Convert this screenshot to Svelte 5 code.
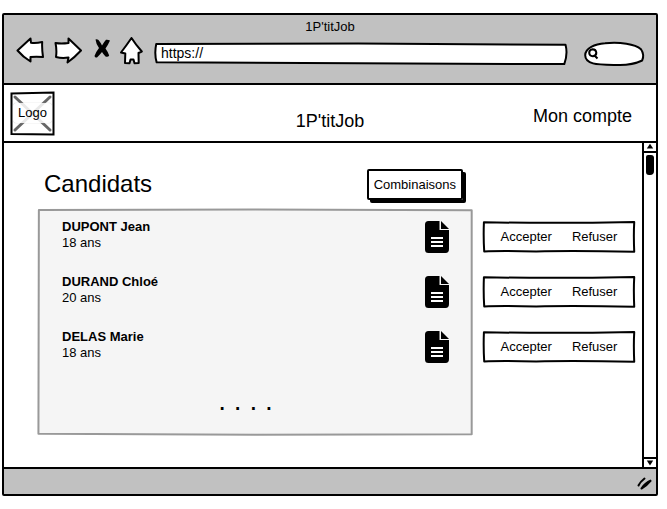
<script>
  const candidates = [
    { name: 'DUPONT Jean', age: '18 ans' },
    { name: 'DURAND Chloé', age: '20 ans' },
    { name: 'DELAS Marie', age: '18 ans' }
  ];
</script>

{#snippet frame(d)}
  <svg class="frame" viewBox="0 0 100 100" preserveAspectRatio="none" aria-hidden="true">
    <path {d} vector-effect="non-scaling-stroke" />
  </svg>
{/snippet}

<div class="window">
  <header class="chrome">
    <div class="caption">1P'titJob</div>
    <div class="toolbar">
      <button class="icon" aria-label="Précédent">
        <svg width="28" height="28" viewBox="0 0 28 28"><path class="line" d="M1.5 13.5 L14.5 1.5 L15 5.8 Q20 6.5 26.2 5 Q25.8 12 27 20 Q20 19.5 14.5 20 L14.5 24.5 Q7 20 1.5 13.5Z" /></svg>
      </button>
      <button class="icon" aria-label="Suivant">
        <svg width="28" height="28" viewBox="0 0 28 28"><path class="line" d="M27 13.5 L14.5 1.5 L14.5 6 Q7 7 1.5 6 Q3 13 2 20 Q8 21.5 14.5 20.5 L13.5 25.5 Q20 21 27 13.5Z" /></svg>
      </button>
      <button class="icon stop" aria-label="Arrêter">
        <svg width="16" height="20" viewBox="0 0 16 20"><path d="M1.5 .5 Q3 0 4.5 1 Q7 4 8 6.5 Q10 3 12 .8 Q14 .5 16 1.5 Q14 6 11.5 9.5 Q14 13 15.2 16.5 Q14 18.5 11.5 17.5 Q9.5 15.5 8 13 Q6 15.5 3 18.5 Q1 19 .5 17 Q2.5 12 5 9 Q2 5 1.5 .5Z" /></svg>
      </button>
      <button class="icon" aria-label="Accueil">
        <svg width="23" height="28" viewBox="0 0 23 28"><path class="line" d="M11.5 1 Q16 8 21.8 14.5 L18.5 16 L18.7 26 L14.5 26.3 L13.5 22.5 L10.5 22.5 L9.5 26.3 L5 26 L5.3 16.5 L1 15.5 Q6 9 11.5 1Z" /></svg>
      </button>
      <label class="address">
        {@render frame('M.3 4 C30 2 70 1 99.4 8 Q100 50 99.1 96 C80 96 50 92 .4 88 Q-.2 50 .3 4Z')}
        <input aria-label="Adresse" value="https://" />
      </label>
      <label class="search">
        {@render frame('M2 55 C2 25 18 8 35 5 C60 -1 85 8 95 30 C99 45 99 65 97 77 C85 91 75 96 60 96 C40 95 25 96 15 89 C7 83 2 70 2 55Z')}
        <svg class="lens" width="11" height="12" viewBox="0 0 11 12"><path d="M4.5 1.2 Q1.2 1.5 1.2 5 Q1.5 8.3 5 8.2 Q8.5 7.8 8.3 4.5 Q8 1.3 4.5 1.2Z M6.5 7.5 L9.5 10.5" /></svg>
        <input aria-label="Rechercher" />
      </label>
    </div>
  </header>

  <div class="banner">
    <div class="logo">
      <svg viewBox="0 0 45 45" aria-hidden="true">
        <path class="edge" d="M1.5 2.5 L43.5 1.5 L43.5 43.5 L1.5 43Z" />
        <path class="cross" d="M5 6 L40 39 M40 6 L5 39" />
      </svg>
      <span>Logo</span>
    </div>
    <div class="brand">1P'titJob</div>
    <a class="account" href="#compte">Mon compte</a>
  </div>

  <div class="viewport">
    <main>
      <div class="heading">
        <h1>Candidats</h1>
        <button class="combine">Combinaisons</button>
      </div>
      <div class="board">
        <section class="panel">
          {@render frame('M.2 .4 L50 .2 L99.7 .6 L99.7 99.7 L50 99.9 L.1 99.5Z')}
          <ul>
            {#each candidates as c}
              <li>
                <div>
                  <strong>{c.name}</strong>
                  <span>{c.age}</span>
                </div>
                <button class="icon" aria-label="Voir le CV de {c.name}">
                  <svg width="24" height="32" viewBox="0 0 24 32">
                    <path d="M3.5 0 H14.5 V9 H24 V28 Q24 32 20.5 32 H3.5 Q0 32 0 28.5 V3.5 Q0 0 3.5 0Z M16 0 L24 8 H16Z" />
                    <path class="rules" d="M6 17 H18 M6 21 H18 M6 25 H18" />
                  </svg>
                </button>
              </li>
            {/each}
          </ul>
          <p class="more">. . . .</p>
        </section>
        <div class="actions">
          {#each candidates as c}
            <div class="choice" role="group" aria-label={c.name}>
              {@render frame('M.6 4 Q50 8 99.5 3 Q99 45 99.5 96 Q60 92 35 95 Q12 92 .8 95 Q.2 50 .6 4Z')}
              <button>Accepter</button>
              <button>Refuser</button>
            </div>
          {/each}
        </div>
      </div>
    </main>
    <div class="scroll" aria-hidden="true">
      <svg class="arrow up" viewBox="0 0 12 10"><path d="M6 1 L10 7 H2Z" /></svg>
      <div class="thumb"></div>
      <svg class="arrow down" viewBox="0 0 12 10"><path d="M2 2 H10 L6 8Z" /></svg>
    </div>
  </div>

  <footer>
    <svg width="18" height="15" viewBox="0 0 18 15"><path d="M2.5 9.5 Q4 6 8.5 2.500 M5.5 12.500 Q11 9.500 15 4.500 Q9 7 5.500 12.500" /></svg>
  </footer>
</div>

<style>
  .window {
    margin: 13px 9px 13px 2px;
    border: 2px solid #000;
    border-radius: 2px;
    background: #fff;
    color: #000;
    font-family: "Liberation Sans", Arial, sans-serif;
    font-size: 13px;
    line-height: 16px;
  }
  .window, .window * { box-sizing: border-box; }
  button, input {
    margin: 0;
    padding: 0;
    border: 0;
    background: none;
    color: inherit;
    font: inherit;
  }
  svg { display: block; }
  .frame {
    position: absolute;
    inset: 0;
    width: 100%;
    height: 100%;
    overflow: visible;
  }
  .frame path {
    fill: #fff;
    stroke: #000;
    stroke-width: 2px;
    stroke-linejoin: round;
  }

  .chrome {
    padding: 4px 12px 16px;
    background: #c1c1c1;
  }
  .caption { text-align: center; }
  .toolbar {
    display: flex;
    align-items: center;
    gap: 10px;
    height: 32px;
  }
  .line {
    fill: #fff;
    stroke: #000;
    stroke-width: 2px;
    stroke-linejoin: round;
  }
  .stop { margin: 0 0 4px 2px; }
  .address {
    position: relative;
    flex: 1;
    height: 22px;
    margin: 6px 6px 0 2px;
    padding: 0 6px;
  }
  .address input {
    position: relative;
    width: 100%;
    height: 20px;
    font-size: 14px;
  }
  .search {
    position: relative;
    display: flex;
    align-items: center;
    width: 60px;
    height: 24px;
    margin-top: 6px;
    padding: 0 8px 0 4px;
  }
  .search input {
    position: relative;
    width: 100%;
    min-width: 0;
  }
  .lens {
    position: relative;
    flex: none;
  }
  .lens path {
    fill: none;
    stroke: #000;
    stroke-width: 2px;
  }

  .banner {
    display: grid;
    grid-template-columns: 1fr auto 1fr;
    align-items: center;
    padding: 6px;
    border-top: 2px solid #000;
    border-bottom: 2px solid #000;
    font-size: 18px;
    line-height: 22px;
  }
  .logo {
    position: relative;
    display: grid;
    place-items: center;
    width: 45px;
    height: 44px;
    font-size: 13px;
    line-height: 20px;
  }
  .logo svg {
    position: absolute;
    inset: 0;
  }
  .edge {
    fill: #fff;
    stroke: #000;
    stroke-width: 2px;
  }
  .cross {
    stroke: #666;
    stroke-width: 3px;
    stroke-linecap: round;
  }
  .logo span {
    position: relative;
    padding: 0 5px;
    border-radius: 4px;
    background: rgb(255 255 255 / 85%);
    box-shadow: 0 0 1px #aaa;
  }
  .brand { padding-top: 16px; }
  .account {
    justify-self: end;
    margin-right: 18px;
    padding-top: 6px;
    color: inherit;
    text-decoration: none;
  }

  .viewport { display: flex; }
  main {
    flex: 1;
    padding: 24px 7px 32px 34px;
  }
  .heading {
    display: flex;
    align-items: center;
    justify-content: space-between;
    margin-right: 172px;
    padding-left: 6px;
  }
  h1 {
    margin: 0;
    font-size: 24px;
    font-weight: 400;
    line-height: 34px;
  }
  .combine {
    padding: 6px 5px;
    border: 2px solid #000;
    border-radius: 2px;
    box-shadow: 3px 3px 0 #000;
    line-height: 15px;
  }
  .board {
    display: flex;
    gap: 10px;
    margin-top: 8px;
  }
  .panel {
    position: relative;
    flex: 1;
    padding: 12px 24px 16px;
  }
  .panel > .frame path {
    fill: #f5f5f5;
    stroke: #999;
  }
  ul {
    position: relative;
    display: grid;
    gap: 23px;
    margin: 0;
    padding: 0;
    list-style: none;
  }
  li {
    display: flex;
    justify-content: space-between;
    height: 32px;
  }
  li div { margin-top: -2px; }
  li strong, li span { display: block; }
  .rules {
    stroke: #fff;
    stroke-width: 2px;
  }
  .more {
    position: relative;
    margin: 20px 20px 0 0;
    font-size: 28px;
    line-height: 36px;
    text-align: center;
  }
  .actions {
    display: grid;
    align-content: start;
    gap: 23px;
    width: 152px;
    padding-top: 12px;
  }
  .choice {
    position: relative;
    display: flex;
    align-items: center;
    justify-content: center;
    gap: 20px;
    height: 32px;
  }
  .choice button { position: relative; }

  .scroll {
    display: flex;
    flex-direction: column;
    width: 14px;
    border-left: 2px solid #000;
  }
  .arrow { height: 10px; }
  .up { border-bottom: 2px solid #000; }
  .down {
    margin-top: auto;
    border-top: 2px solid #000;
  }
  .thumb {
    width: 8px;
    height: 20px;
    margin: 2px;
    border-radius: 2px 3px 4px 3px;
    background: #000;
  }
  footer {
    display: flex;
    justify-content: flex-end;
    padding: 7px 2px 3px;
    border-top: 2px solid #000;
    background: #c1c1c1;
  }
  footer path {
    fill: none;
    stroke: #000;
    stroke-width: 2px;
    stroke-linecap: round;
  }
</style>
